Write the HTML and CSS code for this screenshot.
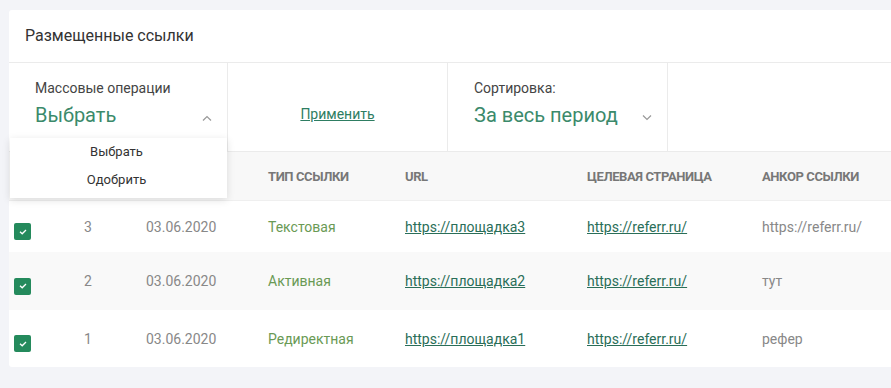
FILE: index.html
```html
<!DOCTYPE html>
<html lang="ru">
<head>
<meta charset="utf-8">
<link rel="stylesheet" href="styles.css">
</head>
<body>
<div class="card">
  <div class="card-title">Размещенные ссылки</div>
  <div class="filters">
    <div class="filter">
      <div class="label">Массовые операции</div>
      <div class="select">
        <span class="value">Выбрать</span>
        <svg class="chev" width="10" height="6" viewBox="0 0 10 6"><path d="M1 5.5L5 1.5L9 5.5" fill="none" stroke="#999" stroke-width="1.2"/></svg>
      </div>
      <div class="menu">
        <div class="menu-item">Выбрать</div>
        <div class="menu-item">Одобрить</div>
      </div>
    </div>
    <div class="filter apply"><a class="apply-link">Применить</a></div>
    <div class="filter">
      <div class="label">Сортировка:</div>
      <div class="select">
        <span class="value">За весь период</span>
        <svg class="chev" width="10" height="6" viewBox="0 0 10 6"><path d="M1 0.5L5 4.5L9 0.5" fill="none" stroke="#999" stroke-width="1.2"/></svg>
      </div>
    </div>
    <div class="filter last"></div>
  </div>
  <div class="table">
    <div class="row head">
      <div></div><div></div><div></div><div>ТИП ССЫЛКИ</div><div>URL</div><div>ЦЕЛЕВАЯ СТРАНИЦА</div><div>АНКОР ССЫЛКИ</div>
    </div>
    <div class="row">
      <div class="cb-cell"><span class="cb"><svg width="8" height="6" viewBox="0 0 8 6"><path d="M1 2.8L3.2 4.8L7 1" fill="none" stroke="#fff" stroke-width="1.3"/></svg></span></div>
      <div class="muted">3</div><div class="muted">03.06.2020</div><div class="type">Текстовая</div>
      <div><a class="link">https://площадка3</a></div><div><a class="link">https://referr.ru/</a></div><div class="muted">https://referr.ru/</div>
    </div>
    <div class="row alt">
      <div class="cb-cell"><span class="cb"><svg width="8" height="6" viewBox="0 0 8 6"><path d="M1 2.8L3.2 4.8L7 1" fill="none" stroke="#fff" stroke-width="1.3"/></svg></span></div>
      <div class="muted">2</div><div class="muted">03.06.2020</div><div class="type">Активная</div>
      <div><a class="link">https://площадка2</a></div><div><a class="link">https://referr.ru/</a></div><div class="muted">тут</div>
    </div>
    <div class="row">
      <div class="cb-cell"><span class="cb"><svg width="8" height="6" viewBox="0 0 8 6"><path d="M1 2.8L3.2 4.8L7 1" fill="none" stroke="#fff" stroke-width="1.3"/></svg></span></div>
      <div class="muted">1</div><div class="muted">03.06.2020</div><div class="type">Редиректная</div>
      <div><a class="link">https://площадка1</a></div><div><a class="link">https://referr.ru/</a></div><div class="muted">рефер</div>
    </div>
  </div>
</div>
</body>
</html>
```
FILE: styles.css
```css
html, body {
  margin: 0;
  padding: 0;
  background: #f3f4f8;
  overflow: hidden;
  font-family: Roboto, "Noto Sans", sans-serif;
}
body {
  padding: 10px 0 0 9px;
}
.card {
  width: 900px;
  background: #fff;
  border-radius: 3px 0 0 3px;
}
.card-title {
  height: 53px;
  box-sizing: border-box;
  padding: 16px 0 0 16px;
  font-size: 16px;
  color: #333;
  border-bottom: 1px solid #ebebeb;
}
.filters {
  display: grid;
  grid-template-columns: 219px 220px 220px 1fr;
  height: 88px;
}
.filter {
  position: relative;
  border-right: 1px solid #ebebeb;
  padding: 17px 15px 0 26px;
}
.filter.last { border-right: none; }
.label {
  font-size: 14px;
  color: #444;
  line-height: 17px;
}
.select {
  display: flex;
  align-items: center;
  justify-content: space-between;
  margin-top: 5px;
}
.value {
  font-size: 20px;
  color: #3b8a6b;
  line-height: 26px;
}
.chev { margin-top: 6px; }
.apply {
  display: flex;
  justify-content: center;
  padding: 43px 0 0 0;
}
.apply-link {
  font-size: 14px;
  color: #2e7d62;
  text-decoration: underline;
  line-height: 17px;
  height: 17px;
}
.menu {
  position: absolute;
  left: 1px;
  top: 75px;
  width: 217px;
  height: 60px;
  background: #fff;
  box-shadow: 0 2px 8px rgba(0,0,0,0.12);
  z-index: 2;
  padding: 0 4px 0 0;
  box-sizing: border-box;
}
.menu-item {
  text-align: center;
  font-size: 13px;
  color: #333;
  line-height: 28px;
}
.row {
  display: grid;
  grid-template-columns: 70px 62px 122px 137px 182px 175px 1fr;
  padding-left: 5px;
  align-items: center;
  font-size: 14px;
}
.row.head {
  height: 50px;
  background: #f8f8f8;
  border-top: 1px solid #ebebeb;
  border-bottom: 1px solid #efefef;
  box-sizing: border-box;
  font-size: 13px;
  font-weight: bold;
  color: #777;
  letter-spacing: -0.4px;
}
.row:not(.head) { height: 54px; }
.row:nth-child(2) { height: 51px; }
.row:nth-child(3) { height: 58px; }
.row:nth-child(4) { height: 57px; }
.row.alt { background: #f9f9f9; }
.muted { color: #888; }
.type { color: #6a9a55; }
.link {
  color: #2a6e58;
  text-decoration: underline;
}
.cb-cell { padding-top: 10px; }
.cb {
  display: flex;
  align-items: center;
  justify-content: center;
  width: 17px;
  height: 17px;
  background: #248a5c;
  border-radius: 2px;
}
```
